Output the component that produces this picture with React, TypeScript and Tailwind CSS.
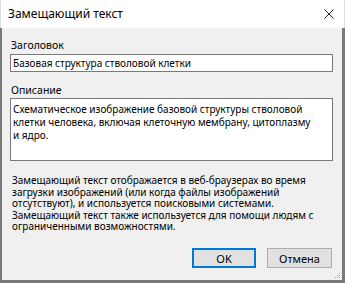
import React from "react";

const descLines = [
  "Схематическое изображение базовой структуры стволовой",
  "клетки человека, включая клеточную мембрану, цитоплазму",
  "и ядро.",
];

const noteLines = [
  "Замещающий текст отображается в веб-браузерах во время",
  "загрузки изображений (или когда файлы изображений",
  "отсутствуют), и используется поисковыми системами.",
  "Замещающий текст также используется для помощи людям с",
  "ограниченными возможностями.",
];

export default function App() {
  return (
    <div className="w-[345px] h-[283px] flex flex-col text-[10px] text-black font-['Noto_Sans',sans-serif]">
      {/* title bar */}
      <div className="h-[28px] shrink-0 bg-white flex items-center justify-between pl-[7px] pr-[10px] border-x border-[#dcdcdc]">
        <span className="text-[12px]">Замещающий текст</span>
        <svg width="10" height="10" viewBox="0 0 10 10" className="text-[#222]">
          <path d="M0.5 0.5 L9.5 9.5 M9.5 0.5 L0.5 9.5" stroke="currentColor" strokeWidth="1" />
        </svg>
      </div>

      {/* body */}
      <div className="relative flex-1 flex flex-col bg-[#f0f0f0] border-l-2 border-r-[3px] border-b-[3px] border-[#7a7a7a] pl-[8px] pr-[9px] pt-[10px] pb-[12px]">
        <div className="pl-[1px] leading-[14px] text-[10.5px]">Заголовок</div>
        <div className="mt-[2px] h-[18px] bg-white border border-[#7a7a7a] pl-[2px] leading-[16px] whitespace-nowrap">
          Базовая структура стволовой клетки
        </div>

        <div className="mt-[11px] pl-[1px] leading-[14px] text-[10.5px]">Описание</div>
        <div className="mt-[1px] h-[63px] bg-white border border-[#7a7a7a] pl-[2px] pt-[4px] leading-[13px]">
          {descLines.map((l) => (
            <div key={l} className="whitespace-nowrap">{l}</div>
          ))}
        </div>

        <div className="mt-[14px] pl-[2px] leading-[11.5px]">
          {noteLines.map((l, i) => (
            <div key={i} className="whitespace-nowrap">{l}</div>
          ))}
        </div>

        <div className="mt-auto flex justify-end gap-[11px] pr-[1px]">
          <button className="w-[64px] h-[20px] bg-[#e1e1e1] border-2 border-[#0078d7] leading-none text-[11px]">OK</button>
          <button className="w-[65px] h-[20px] bg-[#e1e1e1] border border-[#adadad] leading-none text-[11px]">Отмена</button>
        </div>

        {/* resize grip */}
        <svg width="6" height="6" viewBox="0 0 6 6" className="absolute right-[1px] bottom-[1px]">
          <rect x="4" y="0" width="1" height="1" fill="#a0a0a0" />
          <rect x="2" y="2" width="1" height="1" fill="#a0a0a0" />
          <rect x="4" y="2" width="1" height="1" fill="#a0a0a0" />
          <rect x="0" y="4" width="1" height="1" fill="#a0a0a0" />
          <rect x="2" y="4" width="1" height="1" fill="#a0a0a0" />
          <rect x="4" y="4" width="1" height="1" fill="#a0a0a0" />
        </svg>
      </div>
    </div>
  );
}
